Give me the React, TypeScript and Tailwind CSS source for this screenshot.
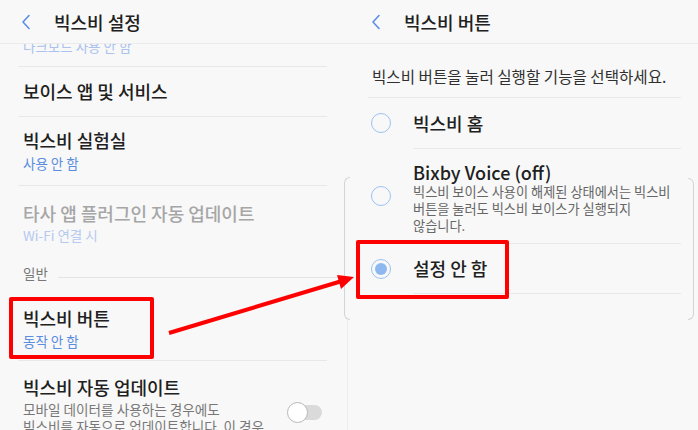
import React from "react";

const font = { fontFamily: '"Noto Sans CJK KR", "Noto Sans", sans-serif' };

function Chevron() {
  return (
    <svg width="12" height="16" viewBox="0 0 12 16" fill="none">
      <path d="M9 1.5 L3 8 L9 14.5" stroke="#5b8ee6" strokeWidth="1.6" strokeLinecap="round" strokeLinejoin="round" />
    </svg>
  );
}

function Radio({ on = false }: { on?: boolean }) {
  return (
    <div className="w-[20px] h-[20px] rounded-full border-[1.5px] border-[#9cc2f2] flex items-center justify-center shrink-0">
      {on && <div className="w-[12px] h-[12px] rounded-full bg-[#8db9f0]" />}
    </div>
  );
}

export default function App() {
  return (
    <div className="relative w-[698px] h-[430px] overflow-hidden flex bg-[#f8f8f8] text-[#202020]" style={font}>
      {/* LEFT */}
      <div className="w-[345px] shrink-0 flex flex-col">
        <div className="h-[44px] shrink-0 flex items-center pl-[20px] border-b border-[#ebebeb] relative z-10 bg-[#f8f8f8]">
          <Chevron />
          <span className="ml-[22px] text-[18px] font-medium leading-none">빅스비 설정</span>
        </div>
        <div className="h-[22px] overflow-hidden shrink-0 px-[23px]">
          <div className="-mt-[9px] text-[13.5px] text-[#a9c2ee] leading-[22px]">다크모드 사용 안 함</div>
        </div>
        <div className="shrink-0 mx-[18px] border-t border-[#e8e8e8]" />
        <div className="shrink-0 h-[49px] flex items-center px-[23px] text-[18px] font-medium">보이스 앱 및 서비스</div>
        <div className="shrink-0 mx-[18px] border-t border-[#e8e8e8]" />
        <div className="shrink-0 h-[68px] flex flex-col justify-center px-[23px]">
          <div className="text-[18px] font-medium leading-[22px]">빅스비 실험실</div>
          <div className="text-[13.5px] text-[#5a8de0] leading-[20px] mt-[2px]">사용 안 함</div>
        </div>
        <div className="shrink-0 mx-[18px] border-t border-[#e8e8e8]" />
        <div className="shrink-0 h-[69px] flex flex-col px-[23px] pt-[16px]">
          <div className="text-[18px] font-medium leading-[22px] text-[#a6a6a6]">타사 앱 플러그인 자동 업데이트</div>
          <div className="text-[13.5px] text-[#b5caef] leading-[20px] mt-[1px]">Wi-Fi 연결 시</div>
        </div>
        <div className="shrink-0 h-[38px] flex items-center pl-[23px]">
          <span className="text-[13.5px] text-[#777] leading-none">일반</span>
          <div className="flex-1 ml-[10px] mt-[6px] border-t border-[#e4e4e4]" />
        </div>
        <div className="shrink-0 h-[67px] flex flex-col px-[23px] pt-[14px]">
          <div className="text-[18px] font-medium leading-[22px]">빅스비 버튼</div>
          <div className="text-[13.5px] text-[#5a8de0] leading-[20px] mt-[2px]">동작 안 함</div>
        </div>
        <div className="shrink-0 mx-[18px] border-t border-[#e8e8e8]" />
        <div className="shrink-0 flex flex-col px-[23px] pt-[15px]">
          <div className="text-[18px] font-medium leading-[22px]">빅스비 자동 업데이트</div>
          <div className="text-[13.6px] text-[#777] leading-[17px] mt-[3px] whitespace-nowrap">
            <div>모바일 데이터를 사용하는 경우에도</div>
            <div>빅스비를 자동으로 업데이트합니다. 이 경우</div>
          </div>
        </div>
      </div>

      {/* RIGHT */}
      <div className="flex-1 flex flex-col">
        <div className="h-[44px] shrink-0 flex items-center pl-[25px] border-b border-[#ebebeb]">
          <Chevron />
          <span className="ml-[22px] text-[18px] font-medium leading-none">빅스비 버튼</span>
        </div>
        <div className="shrink-0 h-[53px] pt-[22px] pl-[27px] text-[15.6px] leading-[20px] text-[#303030] whitespace-nowrap">
          빅스비 버튼을 눌러 실행할 기능을 선택하세요.
        </div>
        <div className="ml-[23px] mr-[17px] border-t border-[#e8e8e8]" />
        <div className="shrink-0 h-[50px] flex items-center pl-[26px]">
          <Radio />
          <span className="ml-[22px] text-[18px] font-medium">빅스비 홈</span>
        </div>
        <div className="ml-[68px] mr-[17px] border-t border-[#e8e8e8]" />
        <div className="shrink-0 h-[94px] flex items-center pl-[26px]">
          <Radio />
          <div className="ml-[22px] pt-[2px]">
            <div className="text-[18px] font-medium leading-[22px]">Bixby Voice (off)</div>
            <div className="text-[13.2px] text-[#666] leading-[17px] whitespace-nowrap">
              <div>빅스비 보이스 사용이 해제된 상태에서는 빅스비</div>
              <div>버튼을 눌러도 빅스비 보이스가 실행되지</div>
              <div>않습니다.</div>
            </div>
          </div>
        </div>
        <div className="ml-[68px] mr-[17px] border-t border-[#e8e8e8]" />
        <div className="shrink-0 h-[49px] flex items-center pl-[26px]">
          <Radio on />
          <span className="ml-[22px] text-[18px] font-medium">설정 안 함</span>
        </div>
        <div className="ml-[68px] mr-[17px] border-t border-[#e8e8e8]" />
      </div>

      {/* toggle */}
      <div className="absolute left-[287px] top-[402px] w-[35px] h-[21px]">
        <div className="absolute left-[4px] right-0 top-[3px] h-[15px] rounded-full bg-[#dadada]" />
        <div className="absolute left-0 top-0 w-[21px] h-[21px] rounded-full bg-white border border-[#b8b8b8]" />
      </div>

      {/* phone edges */}
      <div className="absolute left-[344px] top-[177px] w-[6px] h-[143px] border-l border-y border-[#d4d4d4] rounded-l-[7px]" />
      <div className="absolute left-[688px] top-[178px] w-[6px] h-[142px] border-r border-y border-[#d4d4d4] rounded-r-[7px]" />
      <div className="absolute left-[347px] top-[320px] h-[110px] border-l border-[#ececec]" />

      {/* red boxes */}
      <div className="absolute left-[9px] top-[297px] w-[145px] h-[62px] border-[4px] border-[#ff0000] rounded-[2px]" />
      <div className="absolute left-[356px] top-[240px] w-[153px] h-[59px] border-[4px] border-[#ff0000] rounded-[2px]" />

      {/* arrow */}
      <svg className="absolute left-0 top-0" width="698" height="430" viewBox="0 0 698 430">
        <line x1="169" y1="333" x2="342" y2="281" stroke="#ff0000" strokeWidth="4" />
        <polygon points="354,277 337,275 341,289" fill="#ff0000" />
      </svg>
    </div>
  );
}
